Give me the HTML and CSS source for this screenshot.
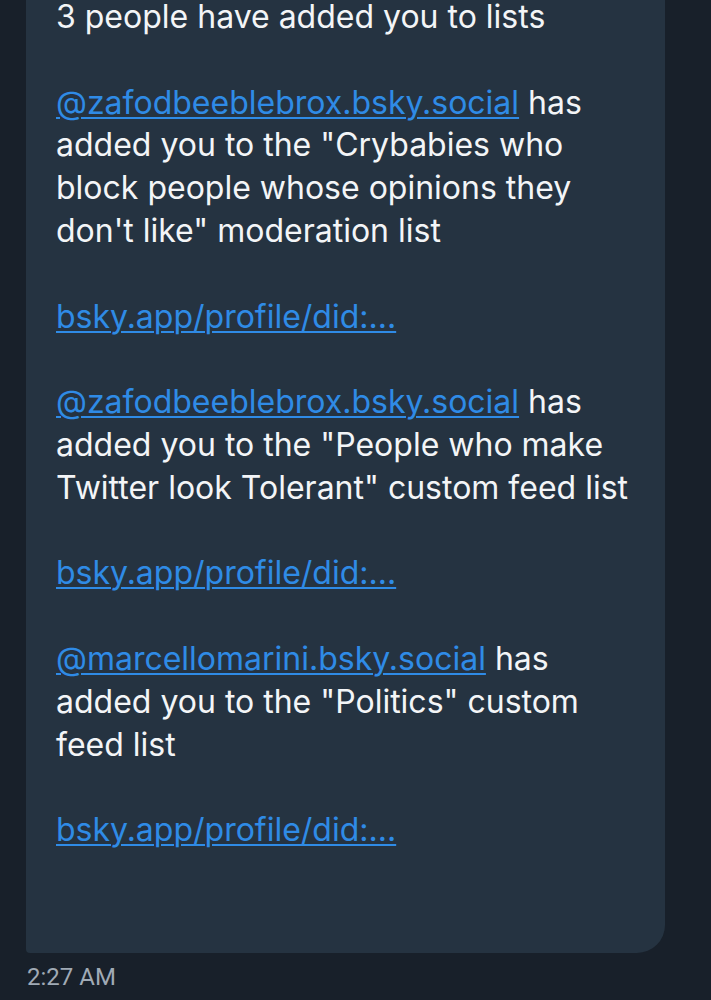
FILE: index.html
```html
<!DOCTYPE html>
<html>
<head>
<meta charset="utf-8">
<link rel="stylesheet" href="styles.css">
</head>
<body>
<div class="chat">
  <div class="bubble">
    <p class="line">3 people have added you to lists</p>
    <p class="gap"></p>
    <p class="line"><a href="#">@zafodbeeblebrox.bsky.social</a> has</p>
    <p class="line">added you to the "Crybabies who</p>
    <p class="line">block people whose opinions they</p>
    <p class="line">don't like" moderation list</p>
    <p class="gap"></p>
    <p class="line"><a href="#">bsky.app/profile/did:...</a></p>
    <p class="gap"></p>
    <p class="line"><a href="#">@zafodbeeblebrox.bsky.social</a> has</p>
    <p class="line">added you to the "People who make</p>
    <p class="line">Twitter look Tolerant" custom feed list</p>
    <p class="gap"></p>
    <p class="line"><a href="#">bsky.app/profile/did:...</a></p>
    <p class="gap"></p>
    <p class="line"><a href="#">@marcellomarini.bsky.social</a> has</p>
    <p class="line">added you to the "Politics" custom</p>
    <p class="line">feed list</p>
    <p class="gap"></p>
    <p class="line"><a href="#">bsky.app/profile/did:...</a></p>
  </div>
  <div class="time">2:27 AM</div>
</div>
</body>
</html>
```

FILE: styles.css
```css
html, body {
  margin: 0;
  padding: 0;
  background: #18202a;
  height: 1000px;
  overflow: hidden;
}
.chat {
  display: flex;
  flex-direction: column;
  padding: 0 46px 0 26px;
}
.bubble {
  margin-top: -40px;
  padding: 36px 20px 101px 30px;
  background: #253341;
  border-radius: 4px 28px 28px 4px;
  color: #f3f5f7;
  font-family: Inter, "Noto Sans", sans-serif;
  font-size: 32px;
  line-height: 42.8px;
}
.line {
  margin: 0;
  white-space: nowrap;
}
.gap {
  margin: 0;
  height: 42.8px;
}
.bubble a {
  color: #2f8be6;
  text-decoration: underline;
  text-decoration-thickness: 2px;
  text-underline-offset: 3px;
}
.time {
  margin-top: 11px;
  padding-left: 1px;
  font-family: Roboto, "Liberation Sans", sans-serif;
  font-size: 24px;
  line-height: 26px;
  color: #a0aab5;
}
```
